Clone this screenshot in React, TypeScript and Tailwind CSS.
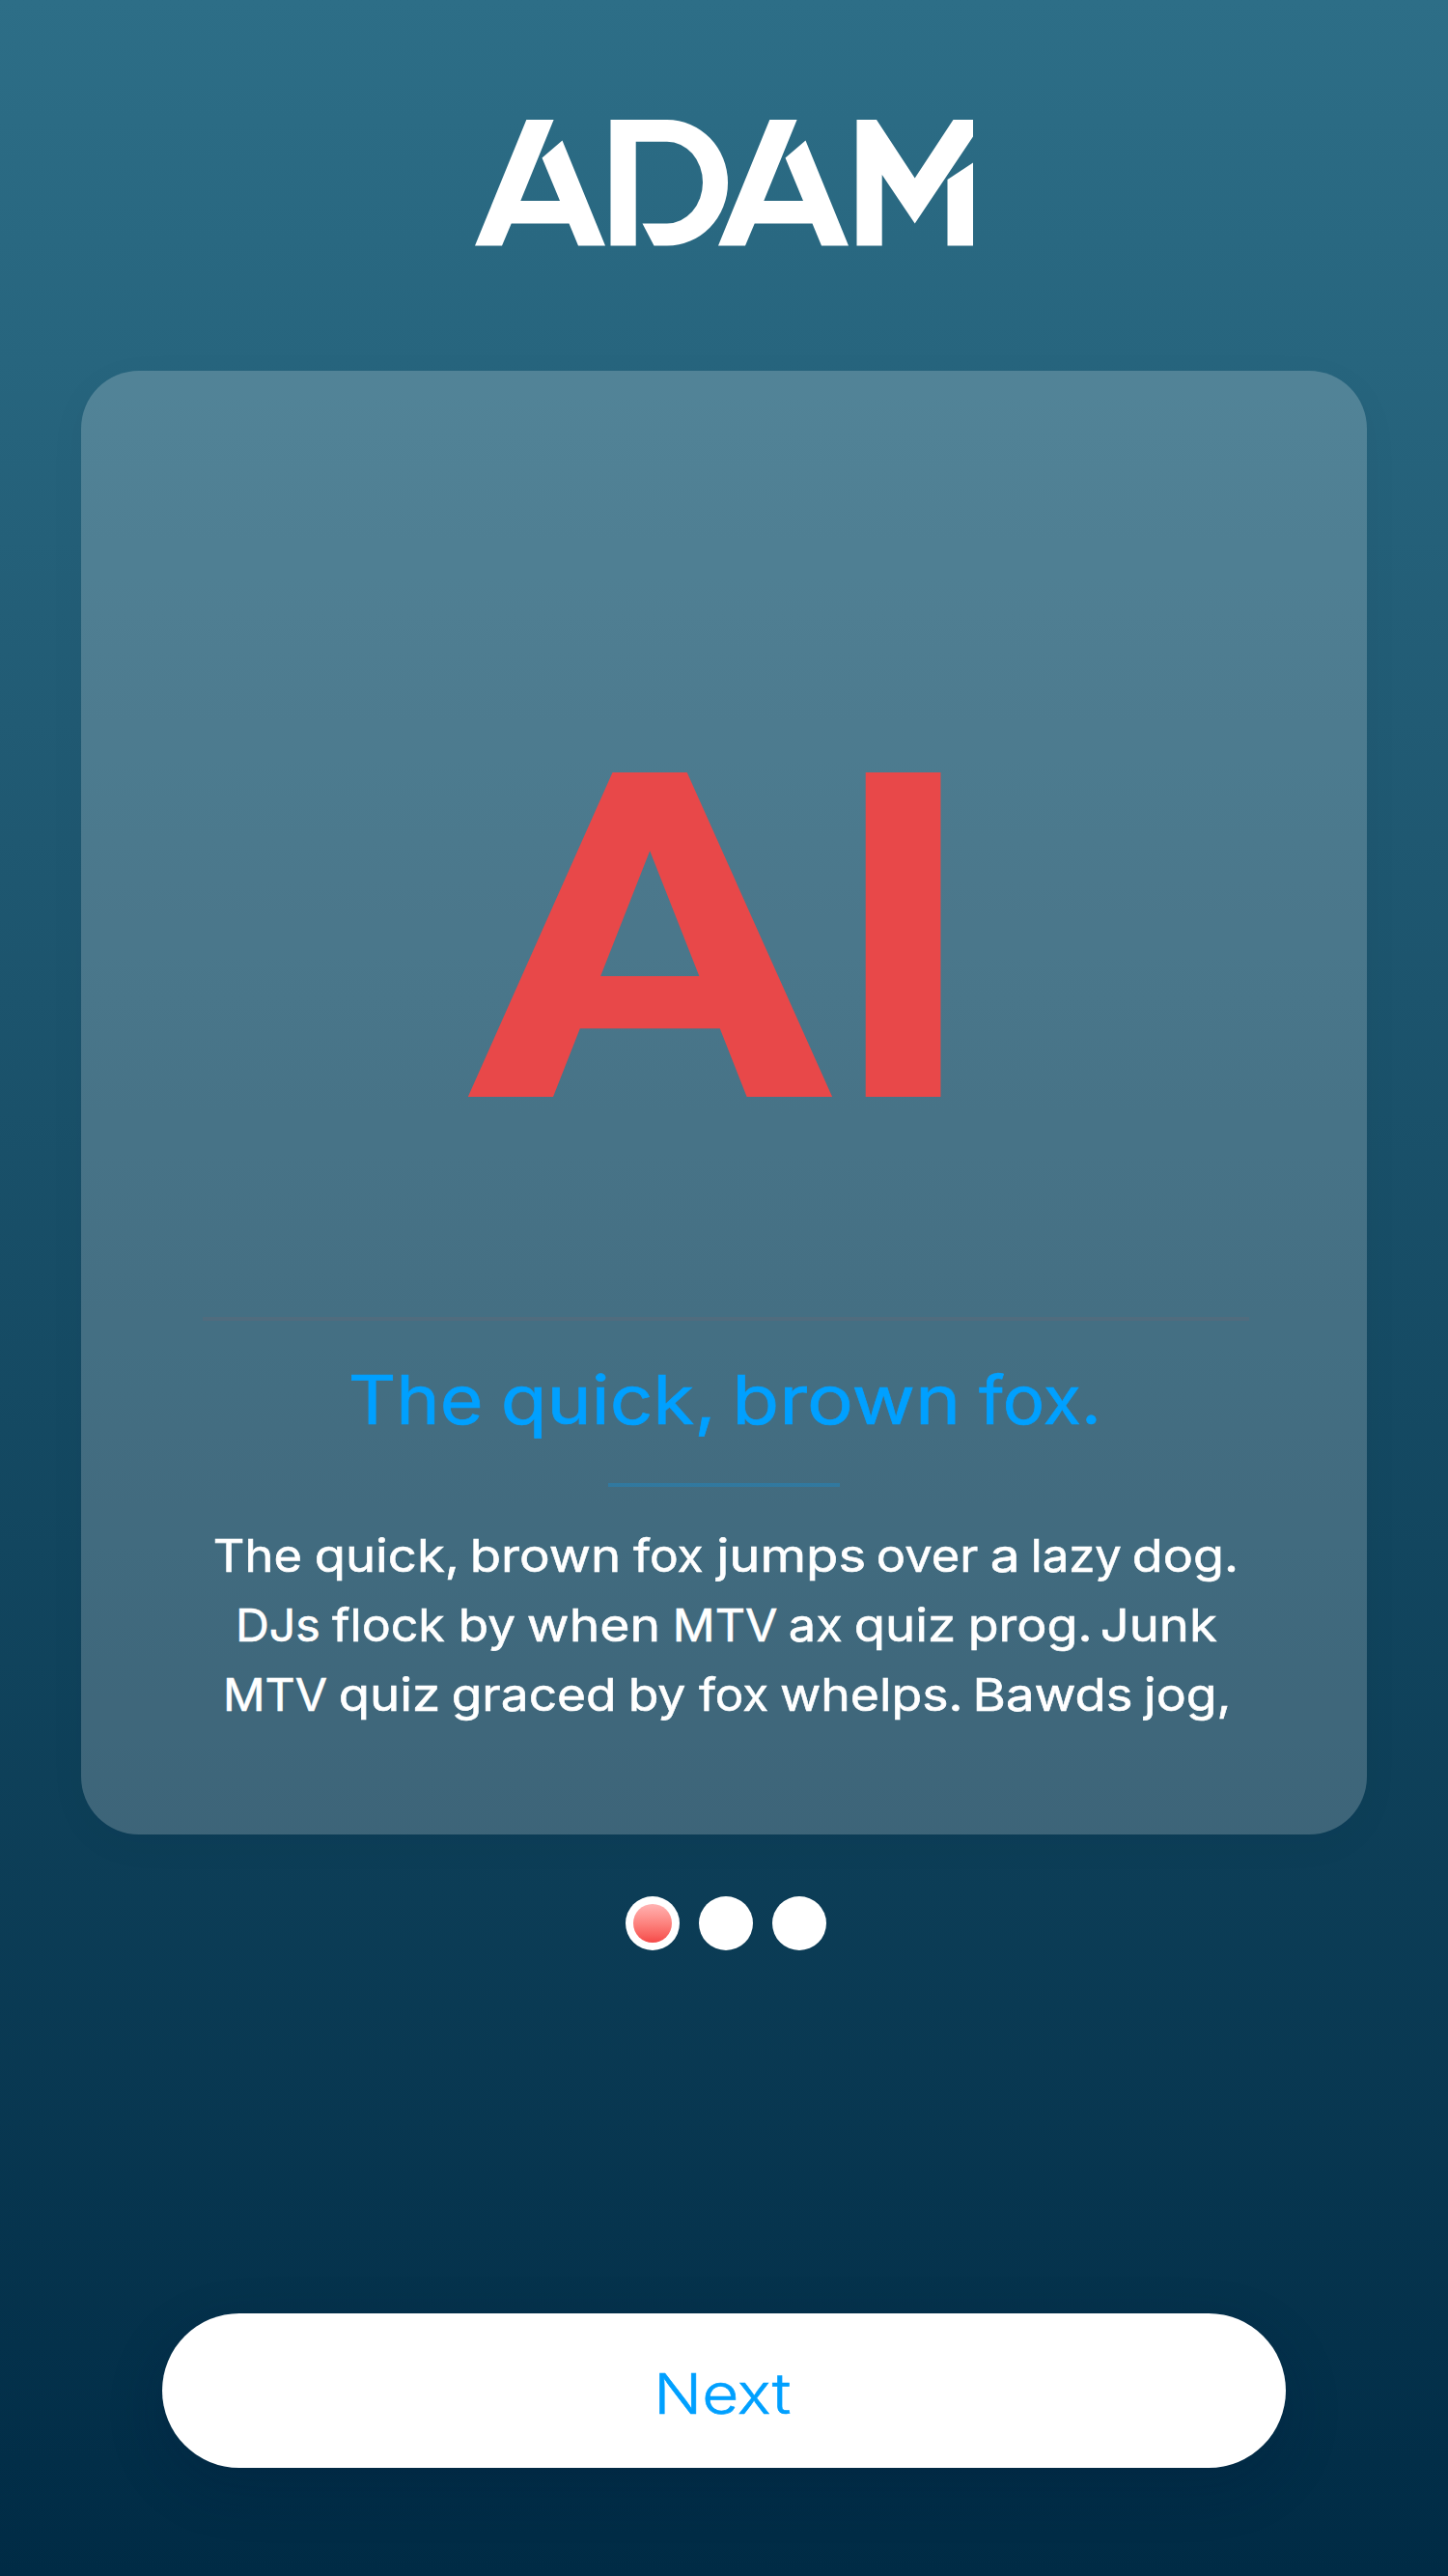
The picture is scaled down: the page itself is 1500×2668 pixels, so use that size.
// A word with the horizontal extent its glyphs should cover on the page.
type Word = [text: string, start: number, end: number];

const CARD_LEFT = 84;

const heading: Word[] = [
  ["The", 363.5, 497],
  ["quick,", 522, 736],
  ["brown", 763.5, 988.5],
  ["fox.", 1014, 1135.5],
];

const body: Word[][] = [
  [
    ["The", 223, 311.5],
    ["quick,", 327.5, 471.5],
    ["brown", 489.5, 639.5],
    ["fox", 656, 728],
    ["jumps", 740.5, 894.5],
    ["over", 909.5, 1012],
    ["a", 1027.5, 1052],
    ["lazy", 1071, 1161.5],
    ["dog.", 1175, 1279],
  ],
  [
    ["DJs", 247.5, 329.5],
    ["flock", 343.5, 460.5],
    ["by", 477.5, 533],
    ["when", 546.5, 680.5],
    ["MTV", 700.5, 804.5],
    ["ax", 819, 872],
    ["quiz", 887, 988],
    ["prog.", 1005.5, 1127],
    ["Junk", 1141.5, 1260.5],
  ],
  [
    ["MTV", 235, 338.5],
    ["quiz", 353, 454],
    ["graced", 469.5, 635],
    ["by", 654, 710],
    ["fox", 724, 795.5],
    ["whelps.", 809, 993.5],
    ["Bawds", 1012, 1171.5],
    ["jog,", 1183.5, 1271],
  ],
];

const ctx = document.createElement("canvas").getContext("2d")!;

function ink(text: string, font: string) {
  ctx.font = font;
  const m = ctx.measureText(text);
  return { left: -m.actualBoundingBoxLeft, width: m.actualBoundingBoxLeft + m.actualBoundingBoxRight };
}

// Sets words on one line, each one stretched to its own measure.
function Line({ words, font, origin = CARD_LEFT }: { words: Word[]; font: string; origin?: number }) {
  return (
    <span className="flex w-full justify-start whitespace-pre">
      {words.map(([text, start, end], i) => {
        const { left, width } = ink(text, font);
        const scale = (end - start) / width;
        const previousEnd = i === 0 ? origin : words[i - 1][2];
        return (
          <span key={i} className="block shrink-0" style={{ width: end - start, marginLeft: start - previousEnd }}>
            <span
              className="inline-block origin-left"
              style={{ transform: `translateX(${-left * scale}px) scaleX(${scale})` }}
            >
              {text}
            </span>
          </span>
        );
      })}
    </span>
  );
}

function Logo() {
  return (
    <svg className="h-[131px] w-[516px]" viewBox="0 0 516 131" fill="#fff" role="img" aria-label="ADAM">
      <path id="peak" d="M0 130.500 53.300 0h28.300L47.300 84H88L69.500 39.500 90.500 21.500 135 130.500h-28L97.500 107.500H37.700L28 130.500Z" />
      <path d="M140.500 0H199a63 65.250 0 0 1 0 130.500H185.500L173.500 107.500H199A37 42.400 0 0 0 199 22.700H166.700V130.500H140.500Z" />
      <use href="#peak" x="252" />
      <path d="M395.500 0H416L455.700 60.500 495.500 0H516V17.500L455.700 107.500 421.700 57V130.500H395.500Z" />
      <path d="M489.500 62 516 44.500V130.500H489.500Z" />
    </svg>
  );
}

export default function App() {
  return (
    <main className="flex h-[2668px] w-[1500px] flex-col items-center overflow-hidden bg-[linear-gradient(180deg,#2d6e87_0%,#27657e_14%,#215b74_28%,#12465f_60%,#002b45_100%)] font-['Inter',sans-serif]">
      <header className="mt-[124px]">
        <Logo />
      </header>

      <section className="mt-[129px] flex h-[1516px] w-[1332px] shrink-0 flex-col items-center rounded-[60px] bg-white/20 shadow-[0_10px_40px_rgba(0,20,40,0.04)]">
        <div className="mt-[351px] h-[480px] w-full font-['Roboto',sans-serif] text-[472.6px] leading-[480px] font-bold text-[#e84849]">
          <Line
            font="700 472.6px Roboto"
            words={[
              ["A", 483, 863.5],
              ["I", 891, 982.5],
            ]}
          />
        </div>
        <div className="mt-[149px] ml-[4px] h-[4px] w-[1084px] shrink-0 bg-[#e94a4a]/8" />
        <h1 className="mt-[34px] w-full text-[70px] leading-[96px] font-normal text-[#00a0ff] [-webkit-text-stroke:0.7px_#00a0ff]">
          <Line words={heading} font="400 70px Inter" />
        </h1>
        <div className="mt-[38px] h-[4px] w-[240px] shrink-0 bg-[#00a0ff]/25" />
        <p className="mt-[35px] w-full text-[47px] leading-[72px] font-normal text-white [-webkit-text-stroke:0.6px_white]">
          {body.map((words, i) => (
            <Line key={i} words={words} font="400 47px Inter" />
          ))}
        </p>
      </section>

      <nav className="mt-[64px] ml-[4px] flex gap-[20px]">
        <span className="flex size-14 items-center justify-center rounded-full bg-white">
          <span className="size-10 rounded-full bg-linear-to-b from-[#ffb3b3] to-[#f54848]" />
        </span>
        <span className="size-14 rounded-full bg-white" />
        <span className="size-14 rounded-full bg-white" />
      </nav>

      <button className="mt-[376px] h-[160px] w-[1164px] shrink-0 rounded-full bg-white pt-[6px] text-left text-[58px] font-light text-[#00a0ff] shadow-[0_20px_60px_rgba(0,20,50,0.2)] [-webkit-text-stroke:0.6px_#00a0ff]">
        <Line words={[["Next", 683, 819]]} font="300 58px Inter" origin={168} />
      </button>
    </main>
  );
}
